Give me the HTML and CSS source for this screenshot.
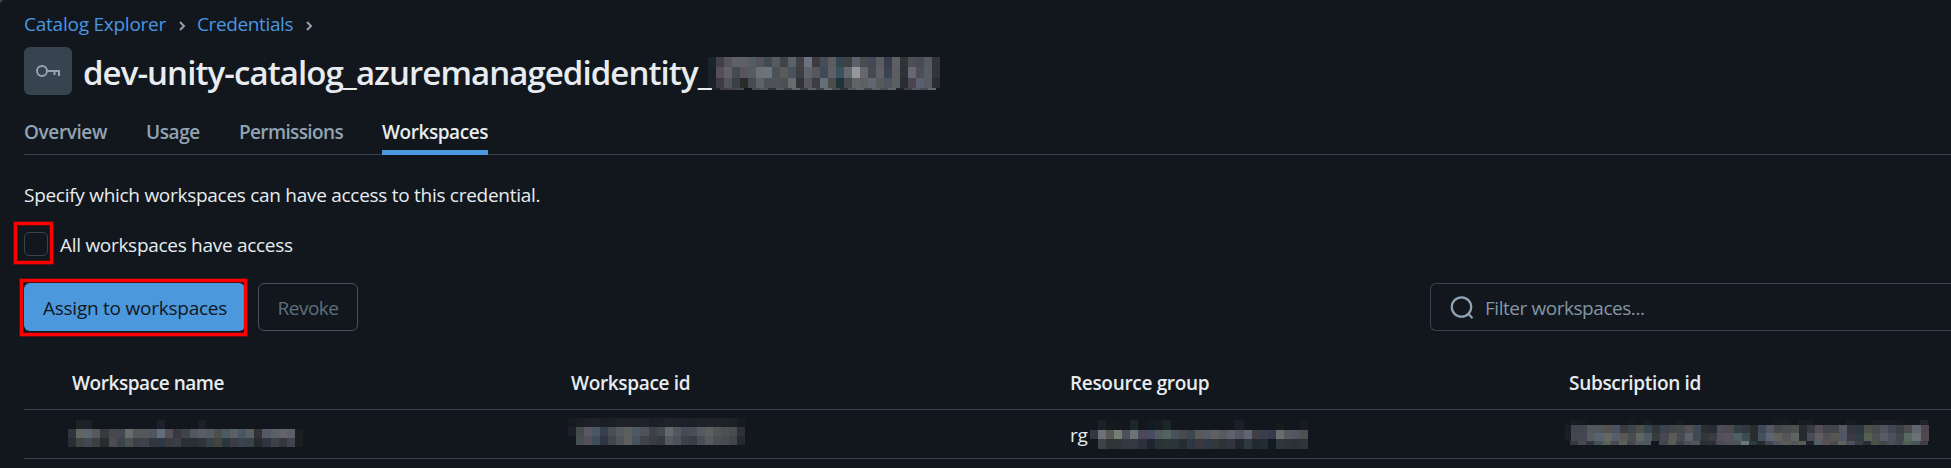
FILE: index.html
```
<!DOCTYPE html>
<html lang="en">
<head>
<meta charset="utf-8">
<title>Credentials - Catalog Explorer</title>
<link rel="stylesheet" href="styles.css">
</head>
<body>
<main class="panel">
  <nav class="breadcrumb">
    <a class="crumb crumb-catalog">Catalog Explorer</a>
    <svg class="chevron" width="6" height="10" viewBox="0 0 6 10"><path d="M1 1l4 4-4 4"/></svg>
    <a class="crumb crumb-cred">Credentials</a>
    <svg class="chevron" width="6" height="10" viewBox="0 0 6 10"><path d="M1 1l4 4-4 4"/></svg>
  </nav>

  <header class="title-row">
    <span class="title-icon">
      <svg width="24" height="12" viewBox="0 0 24 12"><circle cx="6" cy="6" r="5"/><path d="M11 6h12v5M18.500 6v4"/></svg>
    </span>
    <h1 class="title">dev-unity-catalog_azuremanagedidentity_</h1>
    <svg class="redacted redacted-title" data-mosaic="title" width="232" height="33"></svg>
  </header>

  <div class="tabs">
    <span class="tab tab-overview">Overview</span>
    <span class="tab tab-usage">Usage</span>
    <span class="tab tab-permissions">Permissions</span>
    <span class="tab tab-active">Workspaces</span>
  </div>

  <p class="description">Specify which workspaces can have access to this credential.</p>

  <label class="access">
    <span class="checkbox marked marked-check"></span>
    <span class="access-label">All workspaces have access</span>
  </label>

  <div class="toolbar">
    <button class="button button-primary marked marked-button">Assign to workspaces</button>
    <button class="button button-revoke">Revoke</button>
    <div class="search">
      <svg width="24" height="24" viewBox="0 0 24 24"><circle cx="11.500" cy="11" r="9.700"/><path d="M17.800 17.300l4.700 4.900"/></svg>
      <span class="search-text">Filter workspaces...</span>
    </div>
  </div>

  <div class="table">
    <div class="row row-head">
      <span class="th-name">Workspace name</span>
      <span>Workspace id</span>
      <span>Resource group</span>
      <span>Subscription id</span>
    </div>
    <div class="row row-body">
      <span><svg class="redacted redacted-name" data-mosaic="name" width="235" height="27"></svg></span>
      <span><svg class="redacted redacted-id" data-mosaic="id" width="177" height="27"></svg></span>
      <span>rg<svg class="redacted redacted-group" data-mosaic="group" width="218" height="29"></svg></span>
      <span><svg class="redacted redacted-sub" data-mosaic="sub" width="358" height="25"></svg></span>
    </div>
  </div>
</main>
<script src="mosaic.js"></script>
</body>
</html>
```
FILE: styles.css
```
* { box-sizing: border-box; }

body {
  margin: 0;
  background: #3b4852;
  font-family: "Open Sans", "Noto Sans", sans-serif;
  font-size: 19px;
  line-height: 24px;
  letter-spacing: -0.3px;
  color: #e8ecf0;
}

.panel {
  height: 468px;
  overflow: hidden;
  padding: 12px 0 0 24px;
  background: #11171d;
  border-top-left-radius: 5px;
}

.breadcrumb {
  display: flex;
  align-items: center;
  height: 24px;
}

.crumb { color: #4a96e0; }
.crumb-catalog { width: 155px; letter-spacing: -0.24px; }
.crumb-cred { width: 109px; margin-left: 12px; letter-spacing: -0.38px; }

.chevron {
  position: relative;
  top: 2px;
  overflow: visible;
  fill: none;
  stroke: #92a4b3;
  stroke-width: 2;
}

.title-row {
  display: flex;
  align-items: center;
  height: 48px;
  margin-top: 11px;
}

.title-icon {
  display: flex;
  align-items: center;
  justify-content: center;
  flex: none;
  width: 48px;
  height: 48px;
  border-radius: 6px;
  background: #37444f;
}

.title-icon svg {
  fill: none;
  stroke: #92a4b3;
  stroke-width: 2;
}

.title {
  width: 625px;
  margin: 4px 0 0 11px;
  font-size: 33px;
  font-weight: 600;
  line-height: 44px;
  letter-spacing: -0.93px;
  white-space: nowrap;
}

.redacted { display: block; flex: none; shape-rendering: crispEdges; }
.redacted-title { margin-top: 5px; }

.tabs {
  display: flex;
  gap: 40px;
  height: 46px;
  margin-top: 14px;
  border-bottom: 1px solid #37444f;
  font-weight: 600;
  line-height: 47px;
  color: #92a4b3;
}

.tab { height: 46px; white-space: nowrap; }
.tab-overview { width: 82px; letter-spacing: -0.39px; }
.tab-usage { width: 53px; letter-spacing: -0.4px; }
.tab-permissions { width: 103px; letter-spacing: -0.63px; }
.tab-active {
  width: 106px;
  border-bottom: 5px solid #4c98dc;
  letter-spacing: -0.44px;
  color: #e8ecf0;
}

.description {
  margin: 28px 0 0;
  letter-spacing: -0.28px;
}

.access {
  display: flex;
  align-items: center;
  gap: 12px;
  height: 24px;
  margin-top: 25px;
  letter-spacing: -0.29px;
}

.access-label { padding-top: 2px; }

.checkbox {
  width: 24px;
  height: 24px;
  border: 1px solid #37444f;
  border-radius: 5px;
}

.marked { position: relative; }

.marked::after {
  content: "";
  position: absolute;
  border: 3px solid #f00;
  box-shadow: 0 0 0 1px rgba(255, 0, 0, 0.3), inset 0 0 0 1px rgba(255, 0, 0, 0.25);
}

.marked-check::after { inset: -11px -6px -9px -11px; }
.marked-button::after { inset: -4px -2px -5px -4px; }

.toolbar {
  display: flex;
  height: 48px;
  margin-top: 27px;
}

.button {
  height: 48px;
  padding: 1px 0 0;
  border: 1px solid #44525e;
  border-radius: 6px;
  background: transparent;
  font: inherit;
  letter-spacing: -0.24px;
}

.button-primary {
  width: 221px;
  padding: 2px 0 0 1px;
  border: 0;
  background: #4c98dc;
  color: #11171d;
}

.button-revoke {
  width: 100px;
  margin-left: 13px;
  padding-top: 2px;
  letter-spacing: -0.5px;
  color: #5f6f7c;
}

.search {
  display: flex;
  align-items: center;
  gap: 11px;
  width: 521px;
  margin-left: auto;
  padding-left: 19px;
  border: 1px solid #37444f;
  border-right: 0;
  border-radius: 6px 0 0 6px;
  letter-spacing: -0.45px;
  color: #8496a5;
}

.search-text { padding-top: 2px; }

.search svg {
  position: relative;
  top: 1px;
  fill: none;
  stroke: #92a4b3;
  stroke-width: 2.2;
}

.table { margin-top: 26px; }

.row {
  display: grid;
  grid-template-columns: 499px 499px 499px 382px;
  padding-left: 48px;
  border-bottom: 1px solid #37444f;
}

.row-head {
  height: 53px;
  line-height: 53px;
  font-weight: 600;
  letter-spacing: -0.32px;
}

.th-name { letter-spacing: -0.44px; }

.row-body { height: 49px; line-height: 50px; }
.row-body span { display: flex; align-items: flex-start; }

.redacted-name { margin: 10px 0 0 -4px; }
.redacted-id { margin: 8px 0 0 -3px; }
.redacted-group { margin: 10px 0 0 3px; }
.redacted-sub { margin: 10px 0 0 2px; overflow: visible; }
```
FILE: mosaic.js
```
// Each band is [top, height, left, cell colours]; "-" leaves a cell empty.
const mosaics = {
  title: { cell: 8, bands: [
    [0, 10, 0, "1b242b 414049 56545a 5d6265 5f6066 555c64 525459 424b55 56595d 3f444a 5a6167 414244 6b7280 3d3b40 454d57 5c5d60 36464f 3f4244 5a616a 4a4d50 424954 5c5d61 383e49 5d6063 313336 504c54 474a54 56595e 323438"],
    [10, 11, 0, "1a212b 534f5a 626066 434a50 56565b 565b62 6b7276 6a747a 495256 5a5c5a 4a535c 3b3f44 5e636a 56575b 404a55 5e5f64 3b525e 626a70 969799 66666a 464a50 5f6067 3c434c 5b5d61 2e3234 6b6674 4b4e59 585b61 323437"],
    [21, 10, 0, "1b222a 3c3a44 53535a 3a4046 272b2c 484c52 5e6366 4b5358 4f5256 4c5055 686c6e 303338 56565c 3b3d42 666f78 4b4d4b 20323b 464a4c 5f6468 5d5f62 5f6672 565a5b 4d545d 5b5e62 2a2d2f 484551 5b6070 575a60 2b2d30"],
    [31, 2, 4, "1b222a 403f44 45454a 484a50 - 454a50 50555a 2c353c 55575b 3d4348 626669 3b3e43 5c5f63 3f4247 656c72 4d4d50 28333a 4d565b 606466 43464b 59616a 4c4f52 5f6669 202427 403d47 535866 484b50 64686c"]
  ]},
  name: { cell: 8.1, bands: [
    [0, 9, 0, "- 1d2224 1c2129 - - - - - - - - 1c2029 - - - - 1c1e28"],
    [9, 9, 0, "2f353f 62645f 5c6472 54595b 38393d 49474e 424952 686c6d 545659 55575a 51555f 626c7c 545156 3a3742 3d444a 525762 5a5c68 535d62 4c504c 4a5c63 5c6063 495663 5a6062 323236 555967 5a6067 63646b 5d606b 1a1e20"],
    [18, 9, 0, "252e35 404544 414953 3d4043 292c2e 4c4c50 3a424a 4b504f 3e4048 3f414b 33353f 2a3944 3a3b3e 363f45 2c3032 292f36 303439 354148 444341 25383c 3c3b46 39444e 394249 252b2a 2c3540 3c4145 34383c 42434c 1a1e20"]
  ]},
  id: { cell: 8.05, bands: [
    [0, 9, 0, "171b21 1b1f22 1d2127 1e2228 1b1e24 1b2025 1d2224 1f2327 1e2227 20222b 1b1e26 1c2026 20232b 1f2329 1c2028 1c2027 1e2228 1f2329 1e2127 1d2225 1d2123 171c1f"],
    [9, 9, 0, "1c1f29 444b4b 5a5864 4b5665 383f4c 485055 525960 5b605f 4d5962 515159 3d4047 434951 63686b 52585f 454a56 484f5b 555961 5e5e5f 525455 4d5052 494b4d 2d3137"],
    [18, 9, 0, "- 455052 555059 3e4d58 303542 40474a 4d5459 5d605f 47545e 414348 3b3d42 363a40 54595e 4b525e 3d414c 393d46 4a4d54 575a5c 4b4e52 484b51 404549 262a2f"]
  ]},
  group: { cell: 8.08, bands: [
    [0, 10, 0, "- 1b2129 141a1c 141a1c - 1b2628 - 101b24 181c20 1b2628 - - - - - - - 14171f 1d1f28 - - - - 131a1c - - 181a22"],
    [10, 9, 0, "303842 6b7176 575854 737d73 4b505c 6b7476 494957 474c66 525a5c 526462 49515a 4a494f 3b464e 5c5759 525d67 605f62 555a5e 60616f 545666 5f6672 423f44 393e4d 36384d 686c6d 55585d 535462 4c504f"],
    [19, 10, 0, "- 3c4248 2e3536 303638 343842 35383f 2d303d 1e2531 293235 2b3436 29343b 252d30 2c3841 3f363c 2e3a43 32373b 2d3439 32353f 23262d 2f373f 22292e 232b33 101a22 30343b 2d3337 2c3137 2d3538"]
  ]},
  sub: { cell: 8.13, bands: [
    [0, 5, -1, "181c24 171b20 - - 14181a - - 151a1f - 131d26 - 14181b - 171b20 - - - - 14191c - - - - - - 151a1e 171b1e - 181c20 181b23 - 14181b - - 181c20 - - 181b1f 181b20 181b23 171a20 - - 20232c"],
    [5, 16, -6, "1a1f26"],
    [5, 8, 0, "3f4450 3e4650 53565a 505659 50534f 4b5261 3a3c3f 3d444b 4c4e48 38454f 303537 3a434e 41474b 43484b 515154 3f4855 292e30 272c34 4c4b5a 4c494f 303f46 30373f 282c2c 3f4856 515765 46494b 4a4d4e 4d504d 242a2d 363b43 554d56 434349 42464b 565764 33363e 2c363e 4b5146 454a4b 52525f 424552 3a4045 4b4d4c 5e6570 4b474c"],
    [13, 8, 0, "45464f 45464f 555c60 596370 646764 555e6b 585957 484d50 606662 4c5963 373b3b 494852 5a5b57 484a53 5c6068 404952 323638 383c45 54505d 53555a 516067 3c4b4b 282e2e 47515c 5b6472 61605a 55555b 5c6560 262b30 494c56 635b62 515154 555951 515665 393a43 2f3d42 585e4f 4c5150 585a66 4b505b 40464a 5a695f 6b7077 4f494d"],
    [21, 4, -1, "35383d 484b52 30373c 435057 5c5f57 484a4f 5e6159 44484c 53585a 4c5963 - 40454e 5b5b56 3d424a 4d5059 54545b 292f35 2b2f36 4b4956 504e5a 4b5350 6c7681 2b3b3c 252b2d 3e4656 50545e 5c5c56 53565b 5b5d52 1c232a 52606a 5b5058 494951 626457 4b505b 3a3b44 252e35 4a5042 41474a 4b4e59 42464d 505f56 4c5359 433e42"]
  ]}
};

const SVG = "http://www.w3.org/2000/svg";
document.querySelectorAll("[data-mosaic]").forEach(svg => {
  const { cell, bands } = mosaics[svg.dataset.mosaic];
  for (const [top, height, left, colours] of bands) {
    colours.split(" ").forEach((colour, i) => {
      if (colour === "-") return;
      const rect = document.createElementNS(SVG, "rect");
      rect.setAttribute("x", left + i * cell);
      rect.setAttribute("y", top);
      rect.setAttribute("width", cell);
      rect.setAttribute("height", height);
      rect.setAttribute("fill", "#" + colour);
      svg.appendChild(rect);
    });
  }
});
```
